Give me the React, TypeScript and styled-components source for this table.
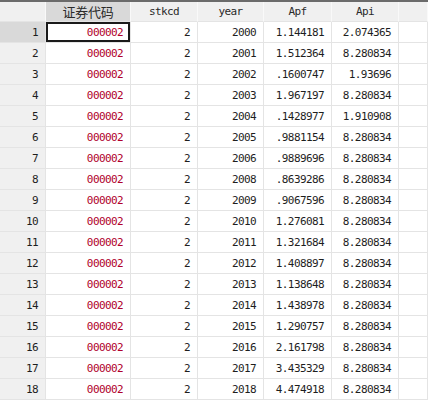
import React from "react";
import styled, { createGlobalStyle } from "styled-components";

const Global = createGlobalStyle`
  html, body { margin: 0; padding: 0; background: #ffffff; }
  body { overflow: hidden; }
`;

const COLS = "46px 85px 67px 66px 68px 67px 1fr";

const Sheet = styled.div`
  width: 428px;
  height: 400px;
  overflow: hidden;
  border-top: 2px solid #6b6b6b;
  box-sizing: border-box;
  font-family: "DejaVu Sans Mono", "Liberation Mono", monospace;
  font-size: 11px;
  letter-spacing: -0.6px;
  color: #1e1e1e;
`;

const Row = styled.div<{ $header?: boolean }>`
  display: grid;
  grid-template-columns: ${COLS};
  height: ${(p) => (p.$header ? 20 : 21)}px;
`;

const Cell = styled.div<{ $red?: boolean; $selected?: boolean }>`
  box-sizing: border-box;
  border-right: 1px solid #e4e4e4;
  border-bottom: 1px solid #e4e4e4;
  display: flex;
  align-items: center;
  justify-content: flex-end;
  padding-right: 7px;
  color: ${(p) => (p.$red ? "#b0002a" : "#1e1e1e")};
  background: #ffffff;
  white-space: nowrap;
  box-shadow: ${(p) => (p.$selected ? "inset 0 0 0 2px #1a1a1a" : "none")};
`;

const HeadCell = styled.div<{ $active?: boolean; $cjk?: boolean }>`
  box-sizing: border-box;
  border-right: 1px solid #f9f9f9;
  border-bottom: 1px solid #e4e4e4;
  background: ${(p) => (p.$active ? "#d9d9d9" : "#f0f0f0")};
  display: flex;
  align-items: center;
  justify-content: center;
  font-family: ${(p) =>
    p.$cjk
      ? '"Noto Sans CJK SC", "Noto Sans", sans-serif'
      : '"DejaVu Sans Mono", "Liberation Mono", monospace'};
  font-size: ${(p) => (p.$cjk ? "13px" : "11px")};
  letter-spacing: ${(p) => (p.$cjk ? "-0.3px" : "-0.6px")};
  color: #2a2a2a;
`;

const RowNum = styled.div<{ $active?: boolean }>`
  box-sizing: border-box;
  border-right: 1px solid #e4e4e4;
  border-bottom: 1px solid #e4e4e4;
  background: ${(p) => (p.$active ? "#d9d9d9" : "#f0f0f0")};
  display: flex;
  align-items: center;
  justify-content: flex-end;
  padding-right: 7px;
  color: #1e1e1e;
`;

const data: [string, string, string][] = [
  ["2000", "1.144181", "2.074365"],
  ["2001", "1.512364", "8.280834"],
  ["2002", ".1600747", "1.93696"],
  ["2003", "1.967197", "8.280834"],
  ["2004", ".1428977", "1.910908"],
  ["2005", ".9881154", "8.280834"],
  ["2006", ".9889696", "8.280834"],
  ["2008", ".8639286", "8.280834"],
  ["2009", ".9067596", "8.280834"],
  ["2010", "1.276081", "8.280834"],
  ["2011", "1.321684", "8.280834"],
  ["2012", "1.408897", "8.280834"],
  ["2013", "1.138648", "8.280834"],
  ["2014", "1.438978", "8.280834"],
  ["2015", "1.290757", "8.280834"],
  ["2016", "2.161798", "8.280834"],
  ["2017", "3.435329", "8.280834"],
  ["2018", "4.474918", "8.280834"],
];

export default function App() {
  return (
    <>
      <Global />
      <Sheet>
        <Row $header>
          <HeadCell />
          <HeadCell $active $cjk>证券代码</HeadCell>
          <HeadCell>stkcd</HeadCell>
          <HeadCell>year</HeadCell>
          <HeadCell>Apf</HeadCell>
          <HeadCell>Api</HeadCell>
          <HeadCell />
        </Row>
        {data.map(([year, apf, api], i) => (
          <Row key={i}>
            <RowNum $active={i === 0}>{i + 1}</RowNum>
            <Cell $red $selected={i === 0}>000002</Cell>
            <Cell>2</Cell>
            <Cell>{year}</Cell>
            <Cell>{apf}</Cell>
            <Cell>{api}</Cell>
            <Cell />
          </Row>
        ))}
      </Sheet>
    </>
  );
}
